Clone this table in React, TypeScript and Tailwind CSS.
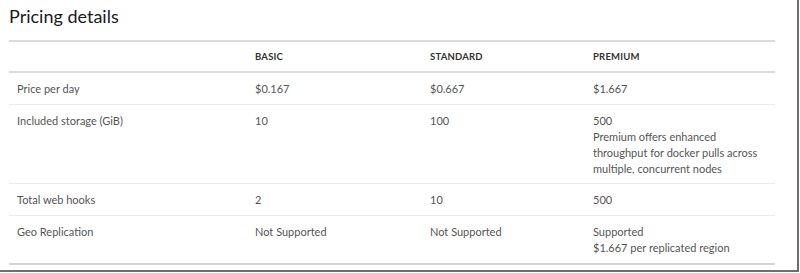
import React from "react";

const rows: { label: string; basic: string; standard: string; premium: string[] }[] = [
  { label: "Price per day", basic: "$0.167", standard: "$0.667", premium: ["$1.667"] },
  {
    label: "Included storage (GiB)",
    basic: "10",
    standard: "100",
    premium: ["500", "Premium offers enhanced", "throughput for docker pulls across", "multiple, concurrent nodes"],
  },
  { label: "Total web hooks", basic: "2", standard: "10", premium: ["500"] },
  { label: "Geo Replication", basic: "Not Supported", standard: "Not Supported", premium: ["Supported", "$1.667 per replicated region"] },
];

export default function App() {
  return (
    <div
      className="w-[799px] h-[272px] bg-white border-r-2 border-b-2 border-[#6e6e6e] overflow-hidden"
      style={{ fontFamily: 'Lato, "Open Sans", sans-serif' }}
    >
      <div className="pl-[9px] w-[775px]">
        <h2 className="text-[18px] leading-[24px] pt-[4px] text-[#1a1a1a] font-normal">Pricing details</h2>
        <div className="mt-[12px] text-[11px] leading-[16px] text-[#555]">
          <div className="flex border-t-2 border-b-2 border-[#dcdcdc] h-[33px] items-center text-[9.5px] font-bold text-[#333] tracking-[0.2px]">
            <div className="w-[238px] px-2"></div>
            <div className="w-[175px] px-2">BASIC</div>
            <div className="w-[163px] px-2">STANDARD</div>
            <div className="flex-1 px-2">PREMIUM</div>
          </div>
          {rows.map((r, i) => (
            <div
              key={i}
              className={
                "flex pt-[8px] " +
                (r.premium.length > 2 ? "pb-[6px] " : "pb-[7px] ") +
                (i === rows.length - 1 ? "border-b-2 border-[#d4d4d4]" : "border-b border-[#ececec]")
              }
            >
              <div className="w-[238px] px-2">{r.label}</div>
              <div className="w-[175px] px-2">{r.basic}</div>
              <div className="w-[163px] px-2">{r.standard}</div>
              <div className="flex-1 px-2 whitespace-nowrap">
                {r.premium.map((p, j) => (
                  <div key={j}>{p}</div>
                ))}
              </div>
            </div>
          ))}
        </div>
      </div>
    </div>
  );
}
